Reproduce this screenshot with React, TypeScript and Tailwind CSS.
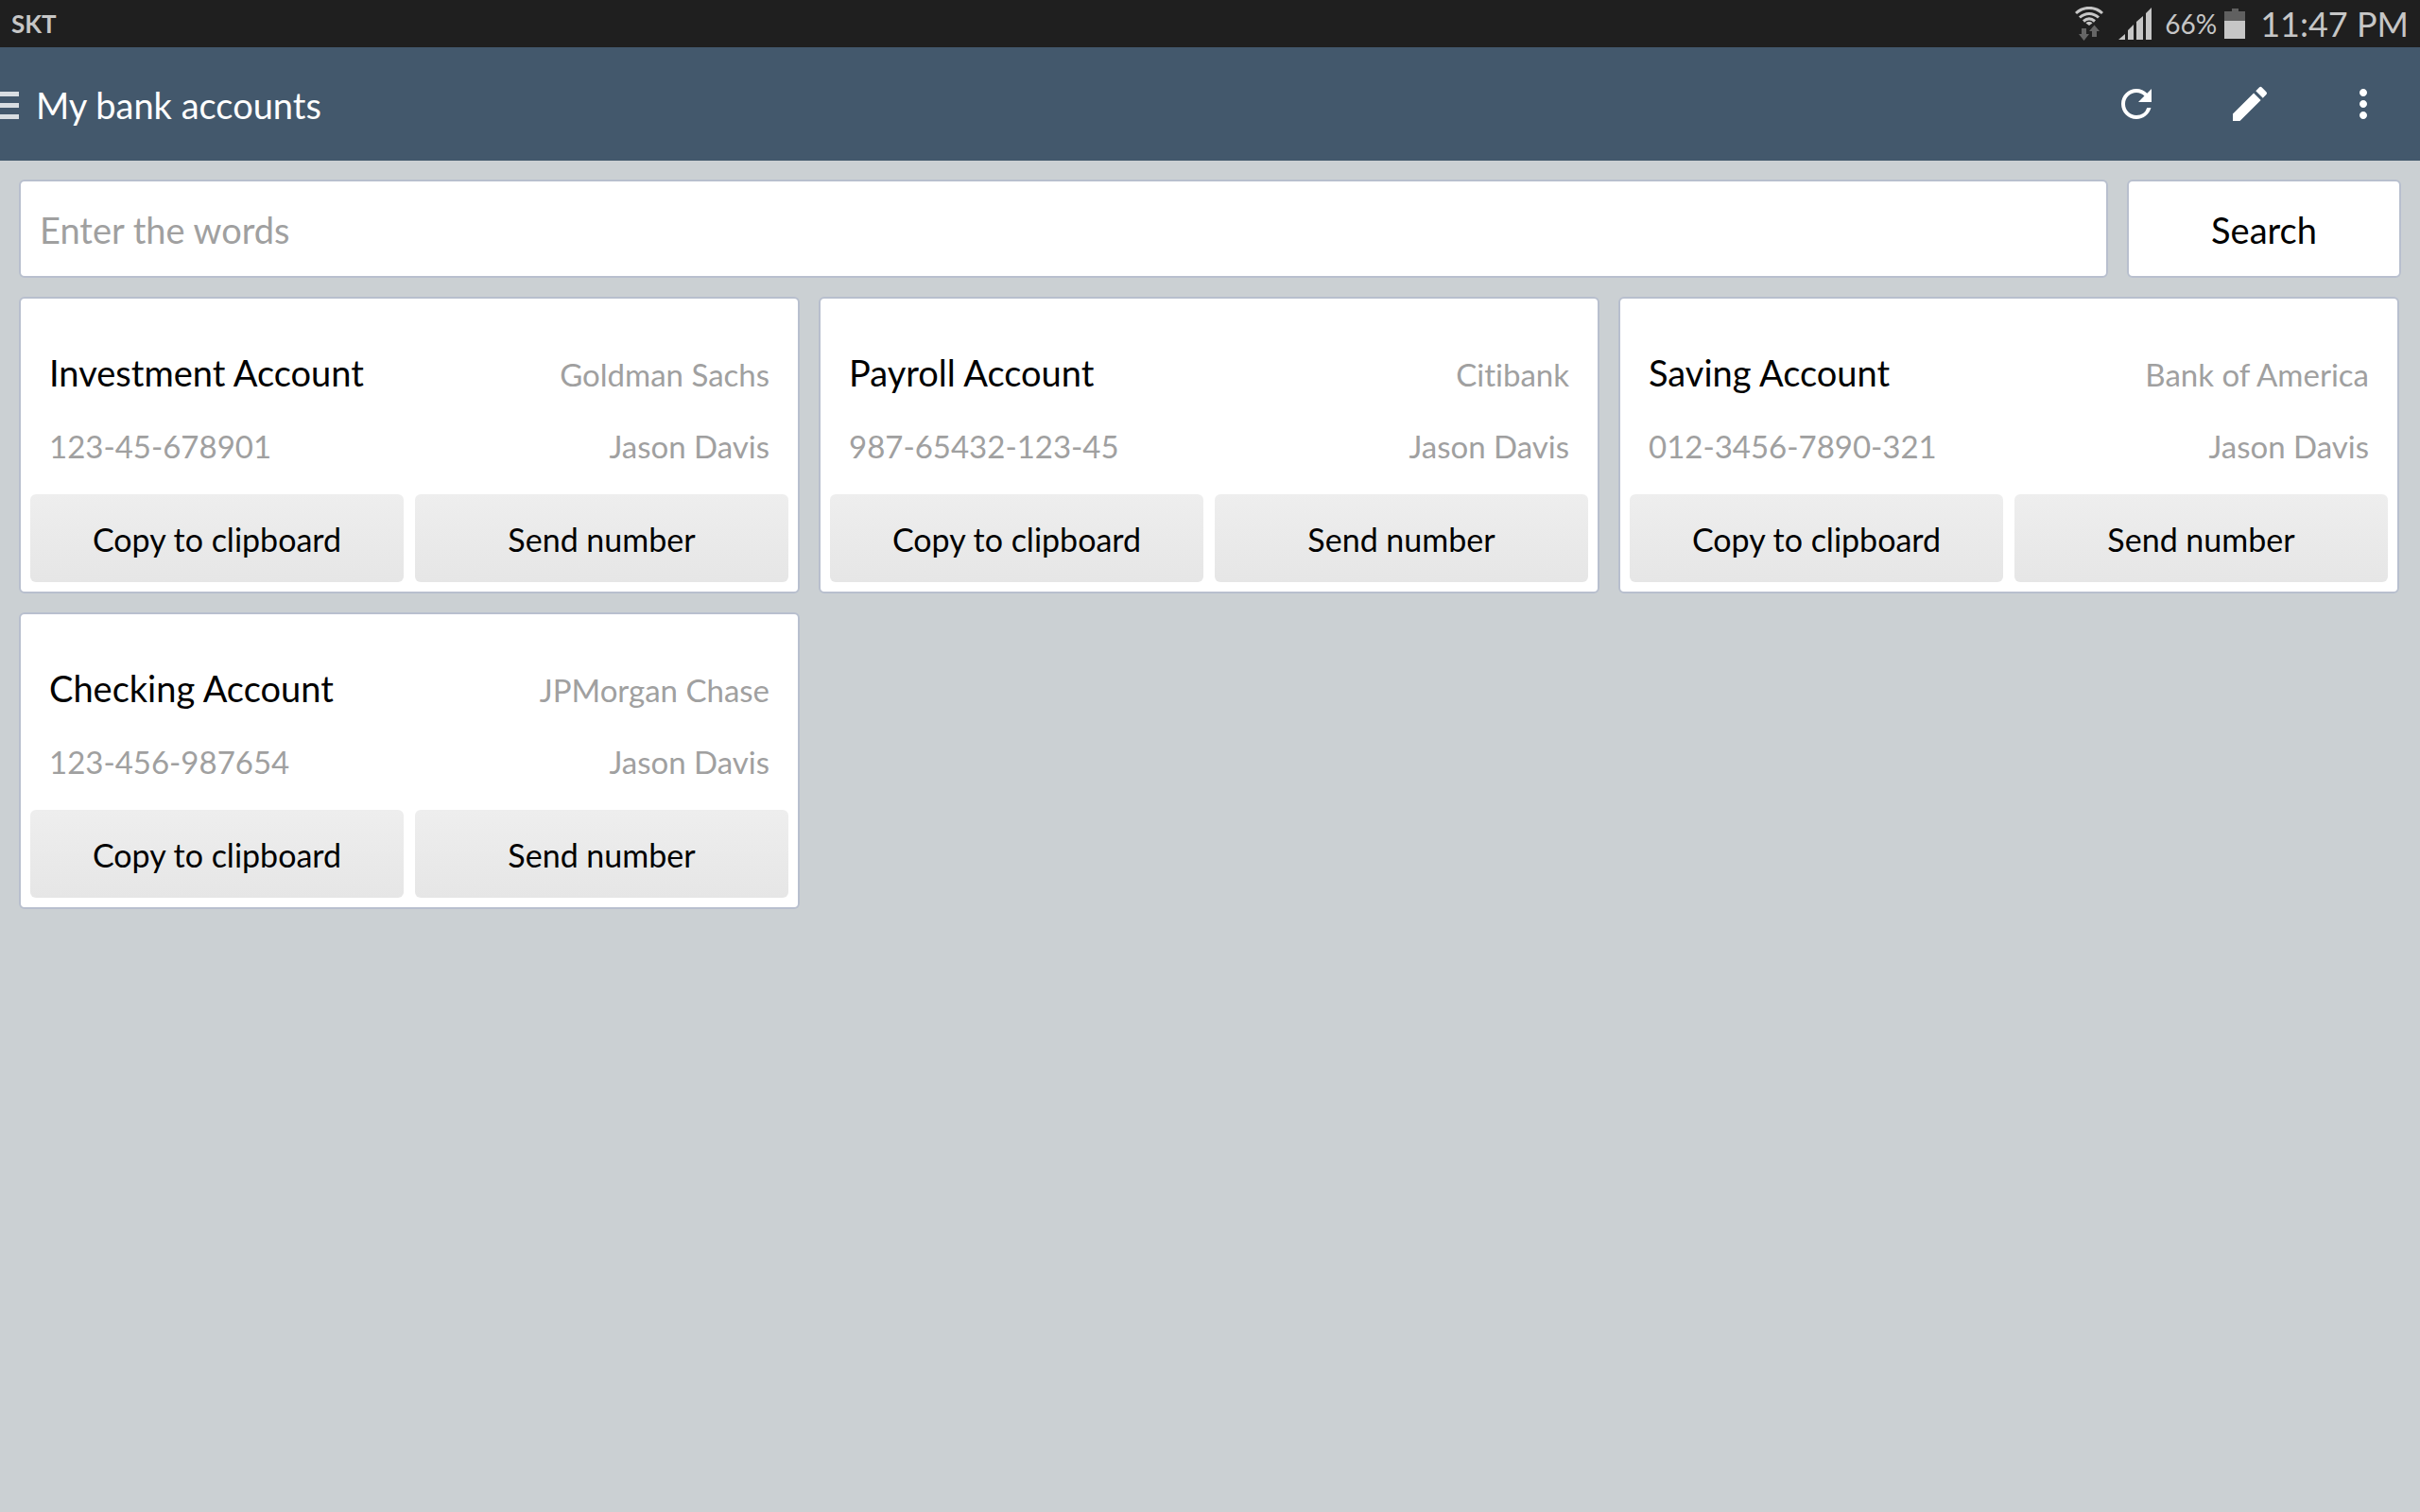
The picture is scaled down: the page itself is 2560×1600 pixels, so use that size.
import React from 'react';
import { MdEdit, MdMoreVert, MdRefresh } from 'react-icons/md';

interface Account {
  title: string;
  bank: string;
  number: string;
  holder: string;
}

const accounts: Account[] = [
  { title: 'Investment Account', bank: 'Goldman Sachs', number: '123-45-678901', holder: 'Jason Davis' },
  { title: 'Payroll Account', bank: 'Citibank', number: '987-65432-123-45', holder: 'Jason Davis' },
  { title: 'Saving Account', bank: 'Bank of America', number: '012-3456-7890-321', holder: 'Jason Davis' },
  { title: 'Checking Account', bank: 'JPMorgan Chase', number: '123-456-987654', holder: 'Jason Davis' },
];

const actions = [
  { label: 'Refresh', Icon: MdRefresh },
  { label: 'Edit', Icon: MdEdit },
  { label: 'More options', Icon: MdMoreVert },
];

const WifiIcon: React.FC = () => (
  <svg width="30" height="36" viewBox="0 0 30 36" aria-hidden="true">
    <g fill="none" stroke="#c6c6c6" strokeWidth="3">
      <path d="M1 7C9 -0.5 21 -0.5 29 7" />
      <path d="M5 11.5C11 6 19 6 25 11.5" />
      <path d="M9 15.500C13 12 17 12 21 15.500" />
    </g>
    <path d="M11.500 17.500C13.500 15.600 16.500 15.600 18.500 17.500L15 20z" fill="#c6c6c6" />
    <path d="M7 23h5v6h3l-5.500 7L4 29h3z" fill="#666" />
    <path d="M18 32h5v-6h3l-5.500-6.500L15 26h3z" fill="#666" />
  </svg>
);

const SignalIcon: React.FC = () => (
  <svg width="35" height="34" viewBox="0 0 35 34" fill="#c6c6c6" aria-hidden="true">
    <path d="M0 34L7 28V34zM10 34V24L16 18V34zM19 34V15L26 9V34zM29 34V6L35 0V34z" />
  </svg>
);

const BatteryIcon: React.FC = () => (
  <svg width="22" height="32" viewBox="0 0 22 32" aria-hidden="true">
    <path d="M0 3h8V0h7v3h7v10H0z" fill="#606060" />
    <path d="M0 13h22v19H0z" fill="#c6c6c6" />
  </svg>
);

const StatusBar: React.FC = () => (
  <div className="flex h-[50px] items-center justify-between bg-[#1f1f1f] px-3 text-[#c6c6c6]">
    <span className="text-[26px] leading-none font-bold">SKT</span>
    <div className="flex items-center">
      <WifiIcon />
      <div className="ml-4">
        <SignalIcon />
      </div>
      <span className="ml-3.5 text-[28px] leading-none">66%</span>
      <div className="ml-2">
        <BatteryIcon />
      </div>
      <span className="ml-4 text-[36px] leading-none">11:47 PM</span>
    </div>
  </div>
);

const AppBar: React.FC = () => (
  <header className="flex h-[120px] items-center bg-[#43586c] text-white">
    <button
      type="button"
      aria-label="Open menu"
      className="flex h-full w-5 flex-col justify-center gap-[7px] pt-0.5"
    >
      <span className="h-[5px] w-full bg-[#d9dee2]" />
      <span className="h-[5px] w-full bg-[#d9dee2]" />
      <span className="h-[5px] w-full bg-[#d9dee2]" />
    </button>
    <h1 className="ml-[18px] flex-1 pt-0.5 text-[38px] leading-[48px]">My bank accounts</h1>
    <nav className="flex h-full">
      {actions.map(({ label, Icon }) => (
        <button key={label} type="button" aria-label={label} className="flex w-[120px] items-center justify-center">
          <Icon className="size-12" />
        </button>
      ))}
    </nav>
  </header>
);

const CardButton: React.FC<{ children: React.ReactNode }> = ({ children }) => (
  <button
    type="button"
    className="h-[93px] flex-1 rounded-md bg-linear-to-b from-[#eeeeee] to-[#e6e6e6] pt-0.5 text-[34px] leading-10 text-black"
  >
    {children}
  </button>
);

const AccountCard: React.FC<{ account: Account }> = ({ account }) => (
  <article className="rounded-md border-2 border-[#b8bfce] bg-white p-2.5 pt-[54px]">
    <div className="flex items-baseline justify-between px-5">
      <h2 className="text-[38px] leading-[48px] text-black">{account.title}</h2>
      <span className="text-[33px] leading-10 text-[#a0a0a0]">{account.bank}</span>
    </div>
    <div className="mt-[34px] flex items-baseline justify-between px-5 text-[33px] leading-10 text-[#a0a0a0]">
      <span>{account.number}</span>
      <span>{account.holder}</span>
    </div>
    <div className="mt-[31px] flex gap-3">
      <CardButton>Copy to clipboard</CardButton>
      <CardButton>Send number</CardButton>
    </div>
  </article>
);

export default function App() {
  return (
    <div className="min-h-screen bg-[#cbd0d3] font-['Lato',sans-serif] [font-variant-ligatures:none]">
      <StatusBar />
      <AppBar />
      <main className="p-5">
        <form className="flex gap-5" onSubmit={(e) => e.preventDefault()}>
          <input
            type="text"
            aria-label="Enter the words"
            placeholder="Enter the words"
            className="h-[104px] min-w-0 flex-1 rounded-md border-2 border-[#b8bfce] bg-white px-5 pt-0.5 text-[38px] text-black outline-none placeholder:text-[#a0a0a0]"
          />
          <button
            type="submit"
            className="h-[104px] w-[290px] rounded-md border-2 border-[#b8bfce] bg-white pt-0.5 text-[38px] text-black"
          >
            Search
          </button>
        </form>
        <section className="mt-5 mr-0.5 grid grid-cols-3 gap-5">
          {accounts.map((account) => (
            <AccountCard key={account.number} account={account} />
          ))}
        </section>
      </main>
    </div>
  );
}
